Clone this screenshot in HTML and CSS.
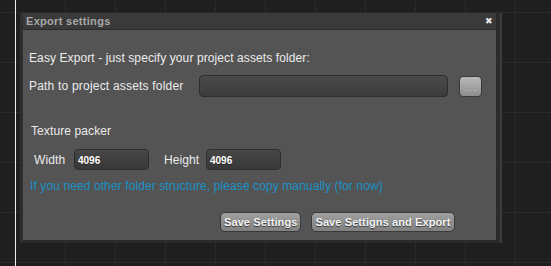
FILE: index.html
```html
<!DOCTYPE html>
<html lang="en">
<head>
    <meta charset="UTF-8">
    <title>Export settings</title>
    <link rel="stylesheet" href="styles.css">
</head>
<body>

<div class="window">
    <div class="title-bar">
        <span class="title">Export settings</span>
        <span class="close">&#x2716;</span>
    </div>
    <div class="content">
        <div class="intro">Easy Export - just specify your project assets folder:</div>

        <div class="path-row">
            <label class="path-label">Path to project assets folder</label>
            <input class="path-input" type="text">
            <button class="browse-btn">. . .</button>
        </div>

        <div class="section-title">Texture packer</div>

        <div class="size-row">
            <label class="size-label">Width</label>
            <input class="size-input" type="text" value="4096">
            <label class="size-label height-label">Height</label>
            <input class="size-input" type="text" value="4096">
        </div>

        <div class="note">If you need other folder structure, please copy manually (for now)</div>

        <div class="actions">
            <button class="action-btn">Save Settings</button>
            <button class="action-btn">Save Settigns and Export</button>
        </div>
    </div>
</div>

</body>
</html>
```

FILE: styles.css
```css
body {
    margin: 0;
    height: 266px;
    overflow: hidden;
    font-family: "Liberation Sans", Arial, sans-serif;
    background-color: #1f1f1f;
    background-image:
        linear-gradient(to right, transparent 15px, #f0f0f0 15px, #f0f0f0 16px, transparent 16px),
        linear-gradient(to right, #2a2a2a 1px, transparent 1px),
        linear-gradient(to bottom, #2a2a2a 1px, transparent 1px);
    background-size: 100% 100%, 50px 50px, 50px 50px;
    background-position: 0 0, 15px 0, 0 12px;
    background-repeat: no-repeat, repeat, repeat;
}

.window {
    margin: 13px 0 0 20px;
    width: 473px;
    background: #2c2c2c;
    border-left: 3px solid #2f2f2f;
    border-right: 4px solid #2b2b2b;
    border-bottom: 3px solid #2a2a2a;
    box-shadow: 2px 0 0 #3d3d3d;
}

.title-bar {
    height: 16px;
    background: #3a3a3a;
    border-bottom: 1px solid #2b2b2b;
    display: flex;
    align-items: center;
    justify-content: space-between;
    padding: 0 3px 0 3px;
}

.title {
    font-size: 11px;
    font-weight: bold;
    color: #a9a9a9;
    letter-spacing: 0.3px;
}

.close {
    font-size: 9px;
    color: #e8e8e8;
}

.content {
    height: 210px;
    background: #545454;
    padding: 0 0 0 6px;
    color: #ececec;
    font-size: 12px;
    letter-spacing: 0.1px;
    box-sizing: border-box;
}

.intro {
    padding-top: 21px;
    line-height: 14px;
}

.path-row {
    display: flex;
    align-items: center;
    margin-top: 10px;
    height: 22px;
}

.path-label {
    width: 170px;
    letter-spacing: 0.2px;
}

.path-input {
    width: 249px;
    height: 22px;
    box-sizing: border-box;
    border: 1px solid #2e2e2e;
    border-radius: 4px;
    background: linear-gradient(#4a4a4a, #3c3c3c);
}

.browse-btn {
    margin-left: 11px;
    width: 23px;
    height: 21px;
    padding: 0;
    border: 1px solid #3a3a3a;
    border-radius: 4px;
    background: linear-gradient(#b8b8b8, #8e8e8e);
    color: #e8e8e8;
    font-size: 8px;
    line-height: 24px;
}

.section-title {
    margin-top: 27px;
    margin-left: 2px;
    line-height: 14px;
}

.size-row {
    display: flex;
    align-items: center;
    margin-top: 11px;
    height: 21px;
    padding-left: 5px;
}

.size-label {
    width: 40px;
}

.height-label {
    margin-left: 15px;
    width: 42px;
}

.size-input {
    width: 75px;
    height: 21px;
    box-sizing: border-box;
    border: 1px solid #2e2e2e;
    border-radius: 4px;
    background: linear-gradient(#474747, #383838);
    color: #ffffff;
    font-family: "Liberation Sans", Arial, sans-serif;
    font-size: 10px;
    font-weight: bold;
    padding: 2px 0 0 3px;
    text-shadow: 0 1px 0 #222;
}

.note {
    margin-top: 9px;
    margin-left: 1px;
    line-height: 14px;
    color: #1992c8;
}

.actions {
    display: flex;
    gap: 10px;
    margin-top: 19px;
    padding-left: 191px;
}

.action-btn {
    height: 20px;
    padding: 0 3px;
    border: 1px solid #3a3a3a;
    border-radius: 5px;
    background: linear-gradient(#a0a0a0, #808080);
    color: #f4f4f4;
    font-family: "Liberation Sans", Arial, sans-serif;
    font-size: 11px;
    font-weight: bold;
    letter-spacing: 0.1px;
    text-shadow: 0 1px 1px #333;
}
```
